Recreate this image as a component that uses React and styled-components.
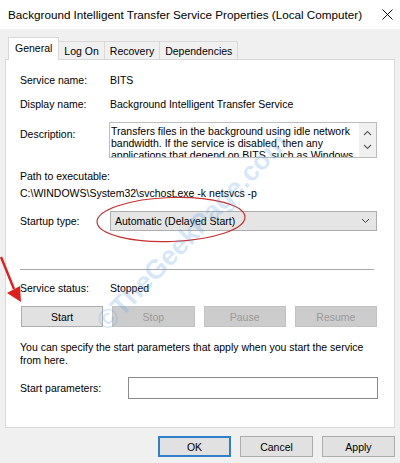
import React from "react";
import styled, { createGlobalStyle } from "styled-components";

const GlobalStyle = createGlobalStyle`
  html, body { margin: 0; padding: 0; background: #f0f0f0; }
  body { font-family: "Liberation Sans", Arial, sans-serif; font-size: 10.5px; color: #000; }
  * { box-sizing: border-box; }
`;

const TABS = ["General", "Log On", "Recovery", "Dependencies"];
const ACTIONS = [
  { label: "Start", enabled: true },
  { label: "Stop", enabled: false },
  { label: "Pause", enabled: false },
  { label: "Resume", enabled: false },
];

const App = () => {
  return (
    <Window>
      <GlobalStyle />
      <TitleBar>
        <span>Background Intelligent Transfer Service Properties (Local Computer)</span>
        <svg width="11" height="11" viewBox="0 0 11 11">
          <path d="M0.5 0.5 L10.5 10.5 M10.5 0.5 L0.5 10.5" stroke="#111" strokeWidth="1" />
        </svg>
      </TitleBar>

      <Body>
        <TabRow>
          {TABS.map((t, i) => (
            <Tab key={t} $active={i === 0}>{t}</Tab>
          ))}
        </TabRow>

        <Panel>
          <Field $mt={12} $h={16}>
            <span>Service name:</span>
            <span>BITS</span>
          </Field>
          <Field $mt={8} $h={16}>
            <span>Display name:</span>
            <span>Background Intelligent Transfer Service</span>
          </Field>
          <Field $mt={10} $h={36} $top>
            <TopLabel>Description:</TopLabel>
            <TextBox>
              <TextBoxText>
                Transfers files in the background using idle network bandwidth. If the service is disabled, then any
                applications that depend on BITS, such as Windows Update or MSN Explorer, will be unable to
                automatically download programs and other information.
              </TextBoxText>
              <ScrollBar>
                <svg width="9" height="6" viewBox="0 0 9 6">
                  <path d="M1 5 L4.5 1.5 L8 5" stroke="#606060" strokeWidth="1.2" fill="none" />
                </svg>
                <svg width="9" height="6" viewBox="0 0 9 6">
                  <path d="M1 1 L4.5 4.5 L8 1" stroke="#606060" strokeWidth="1.2" fill="none" />
                </svg>
              </ScrollBar>
            </TextBox>
          </Field>

          <Line $mt={10}>Path to executable:</Line>
          <Line $mt={1}>C:\WINDOWS\System32\svchost.exe -k netsvcs -p</Line>

          <Field $mt={10} $h={20}>
            <span>Startup type:</span>
            <Select>
              <span>Automatic (Delayed Start)</span>
              <svg width="9" height="6" viewBox="0 0 9 6">
                <path d="M1 1 L4.5 4.5 L8 1" stroke="#444" strokeWidth="1" fill="none" />
              </svg>
            </Select>
          </Field>

          <Separator />

          <Field $mt={10} $h={16}>
            <span>Service status:</span>
            <span>Stopped</span>
          </Field>

          <ActionGrid>
            {ACTIONS.map((a) => (
              <Button key={a.label} $disabled={!a.enabled}>{a.label}</Button>
            ))}
          </ActionGrid>

          <Note>
            You can specify the start parameters that apply when you start the service
            <br />
            from here.
          </Note>

          <ParamRow>
            <span>Start parameters:</span>
            <Input />
          </ParamRow>
        </Panel>

        <Footer>
          <Button $width={73} $primary>OK</Button>
          <Button $width={73}>Cancel</Button>
          <Button $width={73}>Apply</Button>
        </Footer>
      </Body>

      <Annotation width="400" height="463" viewBox="0 0 400 463">
        <ellipse cx="171" cy="219.5" rx="74" ry="22" fill="none" stroke="#c8302e" strokeWidth="1.2" transform="rotate(-2 171 219.5)" />
        <path d="M1 257 L14 289" stroke="#e0201c" strokeWidth="2.4" fill="none" />
        <path d="M7 293 L20 286 L21 302 Z" fill="#e0201c" />
      </Annotation>

      <Watermark>©TheGeekPage.com</Watermark>
    </Window>
  );
};

export default App;

const Window = styled.div`
  width: 400px;
  height: 463px;
  background: #f0f0f0;
  position: relative;
  overflow: hidden;
  display: flex;
  flex-direction: column;
`;

const TitleBar = styled.div`
  height: 29px;
  background: #fff;
  display: flex;
  align-items: center;
  justify-content: space-between;
  padding: 0 7px 0 8px;
  font-size: 11.7px;
`;

const Body = styled.div`
  flex: 1;
  display: flex;
  flex-direction: column;
  padding: 8px 5px 0 5px;
`;

const TabRow = styled.div`
  display: flex;
  align-items: flex-end;
  height: 23px;
  padding-left: 3px;
`;

const Tab = styled.div`
  height: ${({ $active }) => ($active ? "23px" : "19px")};
  padding: ${({ $active }) => ($active ? "0 6px 2px" : "0 5px")};
  display: flex;
  align-items: center;
  border: 1px solid #d9d9d9;
  border-bottom: none;
  background: ${({ $active }) => ($active ? "#fff" : "#f0f0f0")};
  position: ${({ $active }) => ($active ? "relative" : "static")};
  z-index: ${({ $active }) => ($active ? 1 : "auto")};
  margin-left: ${({ $active }) => ($active ? "0" : "-1px")};
`;

const Panel = styled.div`
  margin-top: -1px;
  height: 369px;
  background: #fff;
  border: 1px solid #d9d9d9;
  padding: 0 17px 0 14px;
  display: flex;
  flex-direction: column;
`;

const Field = styled.div`
  display: grid;
  grid-template-columns: 90px 1fr;
  align-items: ${({ $top }) => ($top ? "start" : "center")};
  height: ${({ $h }) => $h}px;
  margin-top: ${({ $mt }) => $mt}px;
  white-space: nowrap;
`;

const TopLabel = styled.span`
  padding-top: 6px;
`;

const TextBox = styled.div`
  height: 36px;
  border: 1px solid #bcbcbc;
  display: flex;
  overflow: hidden;
  margin-left: -1px;
`;

const TextBoxText = styled.div`
  flex: 1;
  padding: 2px 0 0 1px;
  line-height: 12px;
  white-space: normal;
  overflow: hidden;
`;

const ScrollBar = styled.div`
  width: 17px;
  background: #f0f0f0;
  display: flex;
  flex-direction: column;
  align-items: center;
  justify-content: space-around;
  padding: 3px 0;
`;

const Line = styled.div`
  height: 16px;
  line-height: 16px;
  margin-top: ${({ $mt }) => $mt}px;
  white-space: nowrap;
`;

const Select = styled.div`
  height: 20px;
  background: #e5e5e5;
  border: 1px solid #adadad;
  display: flex;
  align-items: center;
  justify-content: space-between;
  padding: 0 6px 0 4px;
`;

const Separator = styled.div`
  height: 1px;
  background: #a8a8a8;
  margin: 38px 3px 0 0;
`;

const ActionGrid = styled.div`
  display: grid;
  grid-template-columns: repeat(4, 1fr);
  column-gap: 9px;
  margin-top: 10px;
  padding-left: 1px;
`;

const Button = styled.div`
  height: 21px;
  width: ${({ $width }) => ($width ? `${$width}px` : "auto")};
  display: flex;
  align-items: center;
  justify-content: center;
  background: ${({ $disabled }) => ($disabled ? "#cccccc" : "#e1e1e1")};
  border: ${({ $primary, $disabled }) =>
    $primary ? "2px solid #2f7fcb" : `1px solid ${$disabled ? "#c2c2c2" : "#adadad"}`};
  color: ${({ $disabled }) => ($disabled ? "#9a9a9a" : "#000")};
`;

const Note = styled.div`
  margin-top: 14px;
  line-height: 12.5px;
  white-space: nowrap;
`;

const ParamRow = styled.div`
  display: grid;
  grid-template-columns: 108px 1fr;
  align-items: center;
  margin-top: 11px;
  height: 22px;
`;

const Input = styled.div`
  height: 22px;
  border: 1px solid #8a8a8a;
  background: #fff;
  margin-right: -1px;
`;

const Footer = styled.div`
  display: flex;
  justify-content: flex-end;
  gap: 9px;
  margin-top: 8px;
`;

const Annotation = styled.svg`
  position: absolute;
  left: 0;
  top: 0;
  pointer-events: none;
`;

const Watermark = styled.div`
  position: absolute;
  left: 62px;
  top: 217px;
  width: 260px;
  text-align: center;
  font-family: "Liberation Sans", Arial, sans-serif;
  font-weight: bold;
  font-size: 27px;
  color: rgba(90, 160, 230, 0.26);
  transform: rotate(-46deg);
  pointer-events: none;
  white-space: nowrap;
`;
